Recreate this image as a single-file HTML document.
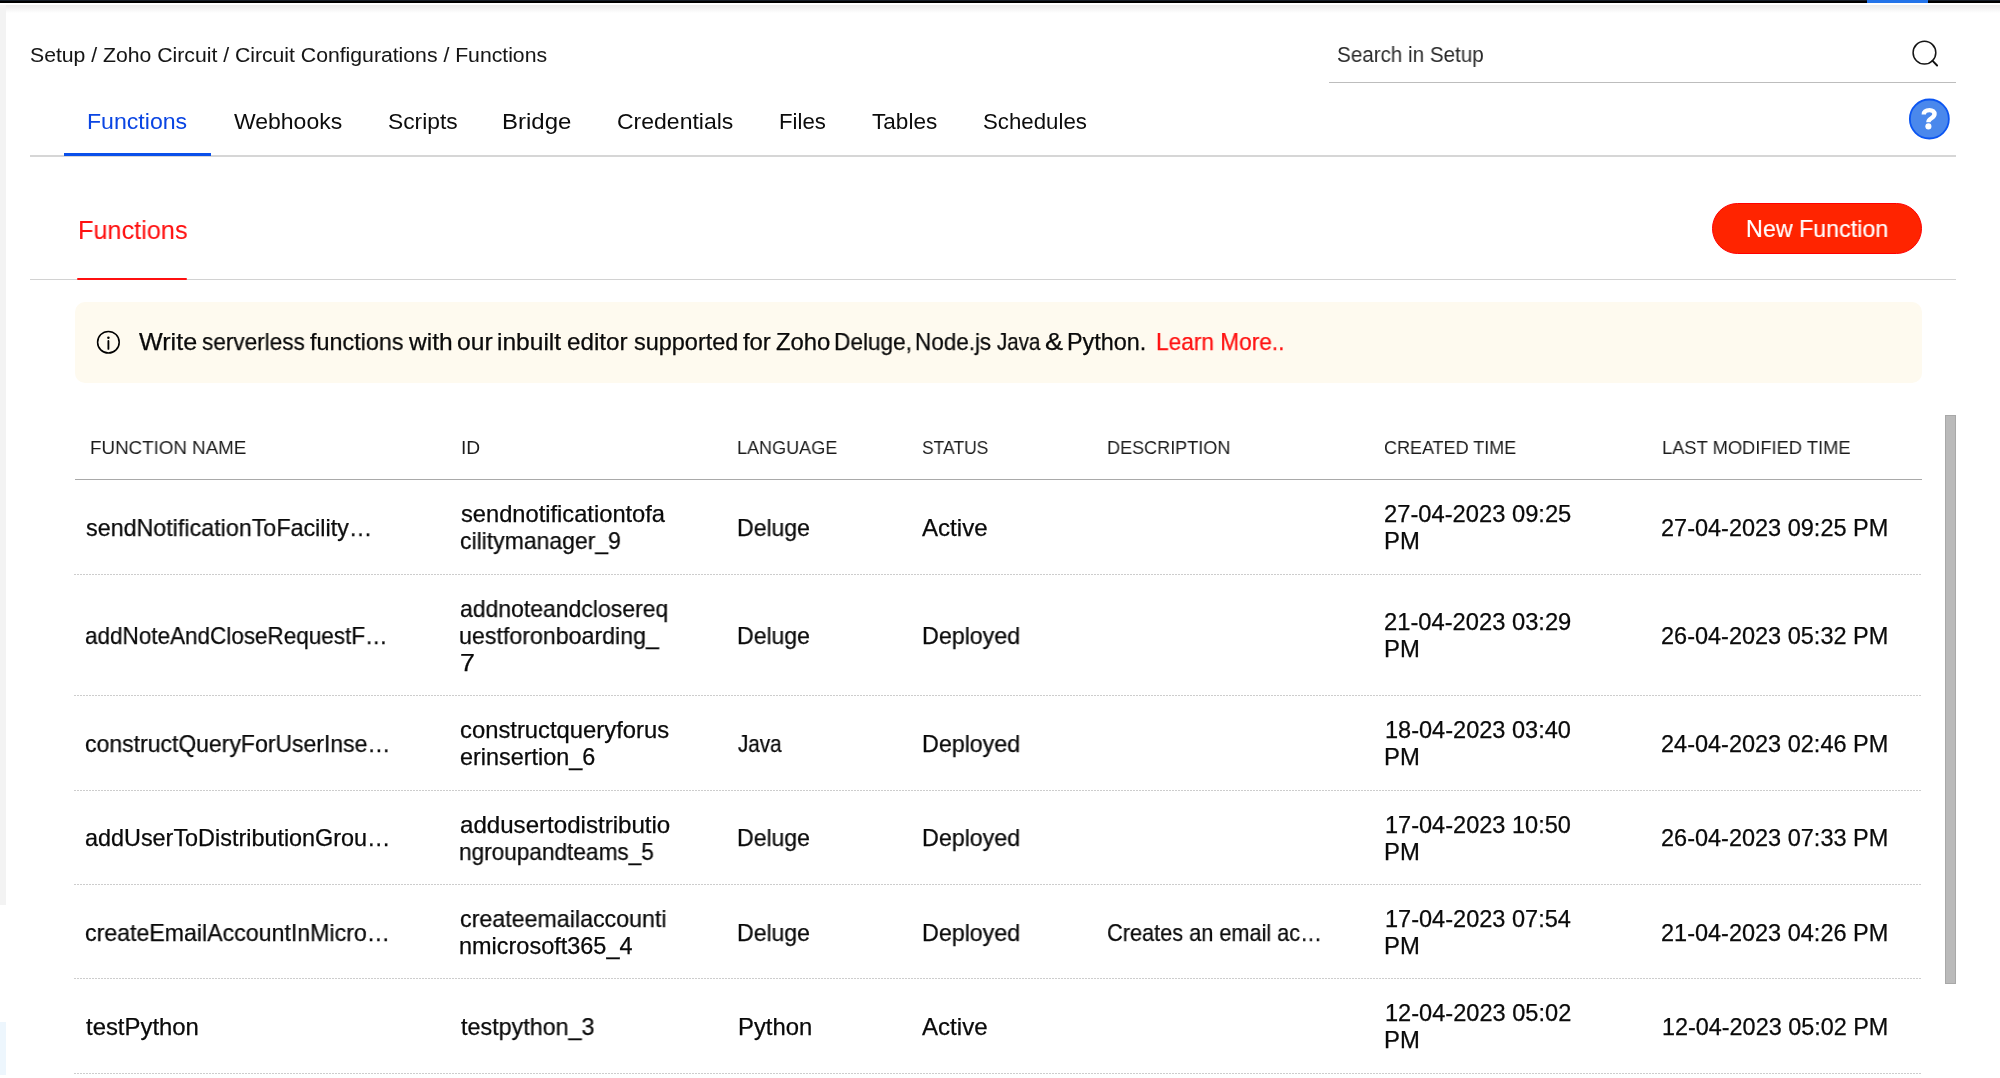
<!DOCTYPE html>
<html><head><meta charset="utf-8"><style>
html,body{margin:0;padding:0;background:#fff;width:2000px;height:1078px;overflow:hidden;position:relative;font-family:"Liberation Sans",sans-serif}
.t{position:absolute;white-space:nowrap;line-height:1;transform-origin:0 0;will-change:transform}
.a{position:absolute}
.dot{position:absolute;left:74px;width:1848px;height:1px;background:repeating-linear-gradient(to right,#cdcdcd 0 2px,transparent 2px 3px)}
</style></head><body>
<div class="a" style="left:0;top:0;width:2000px;height:1px;background:#161d27"></div>
<div class="a" style="left:0;top:1px;width:2000px;height:2px;background:#000"></div>
<div class="a" style="left:1867px;top:0;width:61px;height:3px;background:#2374ea"></div>
<div class="a" style="left:0;top:3px;width:2000px;height:10px;background:linear-gradient(#fff 0,#fff 20%,#ececec 25%,#fff 100%)"></div>
<div class="a" style="left:0;top:5px;width:6px;height:900px;background:#f3f3f3"></div>
<div class="a" style="left:0;top:1022px;width:6px;height:53px;background:#edf6fd"></div>
<!-- search underline -->
<div class="a" style="left:1329px;top:81.5px;width:627px;height:1.5px;background:#bdbdbd"></div>
<svg class="a" style="left:1900px;top:30px" width="50" height="50" viewBox="0 0 50 50">
 <circle cx="24.45" cy="22.65" r="11.35" fill="none" stroke="#151515" stroke-width="1.55"/>
 <line x1="32.4" y1="30.7" x2="37.1" y2="35.5" stroke="#111" stroke-width="1.9" stroke-linecap="round"/>
</svg>
<svg class="a" style="left:1899px;top:89px" width="60" height="60" viewBox="0 0 60 60">
 <circle cx="30.35" cy="30" r="19.5" fill="#4a88ec" stroke="#0b55f2" stroke-width="1.8"/>
 <path d="M24.8 25.5 C24.9 22.3 27.4 21.1 30.5 21.1 C33.6 21.1 35.5 22.9 35.5 25.1 C35.5 27.5 33.7 28.3 32.0 29.5 C30.2 30.7 29.4 31.3 29.4 33.3" fill="none" stroke="#fff" stroke-width="4.4" stroke-linecap="butt"/>
 <circle cx="29.4" cy="37.4" r="3.05" fill="#fff"/>
</svg>
<!-- tabs line -->
<div class="a" style="left:30px;top:155px;width:1926px;height:1.5px;background:#d6d6d6"></div>
<div class="a" style="left:64px;top:153px;width:147px;height:3px;background:#0a50ea"></div>
<!-- functions line -->
<div class="a" style="left:30px;top:279px;width:1926px;height:1.2px;background:#d2d2d2"></div>
<div class="a" style="left:77px;top:277.8px;width:110px;height:2.4px;border-radius:1.2px;background:#ff1010"></div>
<!-- button -->
<div class="a" style="left:1712px;top:203px;width:208px;height:49px;border-radius:26px;background:#ff2400;border:1.5px solid #ff0000"></div>
<!-- banner -->
<div class="a" style="left:74.5px;top:302.2px;width:1847.5px;height:80.6px;border-radius:10px;background:#fefaef"></div>
<svg class="a" style="left:90px;top:324px" width="36" height="36" viewBox="0 0 36 36">
 <circle cx="18.4" cy="18.2" r="10.8" fill="none" stroke="#000" stroke-width="1.55"/>
 <circle cx="18.4" cy="13.7" r="1.25" fill="#000"/>
 <line x1="18.4" y1="16.9" x2="18.4" y2="24.9" stroke="#000" stroke-width="1.85" stroke-linecap="round"/>
</svg>
<!-- header line -->
<div class="a" style="left:74.5px;top:479px;width:1847.5px;height:1.2px;background:#a9a9a9"></div>
<div class="dot" style="top:573.7px"></div>
<div class="dot" style="top:695.0px"></div>
<div class="dot" style="top:790.1px"></div>
<div class="dot" style="top:883.8px"></div>
<div class="dot" style="top:978.3px"></div>
<div class="dot" style="top:1072.5px"></div>
<!-- scrollbar -->
<div class="a" style="left:1945px;top:415px;width:9px;height:567px;background:#bababa;border:1px solid #a8a8a8"></div>
<div class="t" style="left:29.84px;top:45.39px;font-size:20.8px;color:#161616;transform:scaleX(1.0189);-webkit-text-stroke:0.05px currentColor">Setup / Zoho Circuit / Circuit Configurations / Functions</div>
<div class="t" style="left:1337.06px;top:43.85px;font-size:21.2px;color:#2b2b2b;transform:scaleX(0.9730);-webkit-text-stroke:0px currentColor">Search in Setup</div>
<div class="t" style="left:86.79px;top:110.50px;font-size:22.2px;color:#0a45e3;transform:scaleX(1.0414);-webkit-text-stroke:0px currentColor">Functions</div>
<div class="t" style="left:233.80px;top:110.50px;font-size:22.2px;color:#0c0c0c;transform:scaleX(1.0357);-webkit-text-stroke:0px currentColor">Webhooks</div>
<div class="t" style="left:387.79px;top:110.50px;font-size:22.2px;color:#0c0c0c;transform:scaleX(1.0277);-webkit-text-stroke:0px currentColor">Scripts</div>
<div class="t" style="left:502.13px;top:110.50px;font-size:22.2px;color:#0c0c0c;transform:scaleX(1.0806);-webkit-text-stroke:0px currentColor">Bridge</div>
<div class="t" style="left:616.92px;top:110.50px;font-size:22.2px;color:#0c0c0c;transform:scaleX(1.0366);-webkit-text-stroke:0px currentColor">Credentials</div>
<div class="t" style="left:779.18px;top:110.50px;font-size:22.2px;color:#0c0c0c;transform:scaleX(0.9923);-webkit-text-stroke:0px currentColor">Files</div>
<div class="t" style="left:872.05px;top:110.50px;font-size:22.2px;color:#0c0c0c;transform:scaleX(1.0169);-webkit-text-stroke:0px currentColor">Tables</div>
<div class="t" style="left:983.30px;top:110.50px;font-size:22.2px;color:#0c0c0c;transform:scaleX(1.0031);-webkit-text-stroke:0px currentColor">Schedules</div>
<div class="t" style="left:77.63px;top:217.96px;font-size:25.8px;color:#ff1010;transform:scaleX(0.9795);-webkit-text-stroke:0.05px currentColor">Functions</div>
<div class="t" style="left:1745.58px;top:218.29px;font-size:23.4px;color:#ffffff;transform:scaleX(0.9949);-webkit-text-stroke:0.2px currentColor">New Function</div>
<div class="t" style="left:138.60px;top:331.19px;font-size:23.4px;color:#0a0a0a;transform:scaleX(1.0729);-webkit-text-stroke:0.25px currentColor">Write</div>
<div class="t" style="left:201.65px;top:331.19px;font-size:23.4px;color:#0a0a0a;transform:scaleX(0.9637);-webkit-text-stroke:0.25px currentColor">serverless</div>
<div class="t" style="left:310.00px;top:331.19px;font-size:23.4px;color:#0a0a0a;transform:scaleX(0.9976);-webkit-text-stroke:0.25px currentColor">functions</div>
<div class="t" style="left:409.38px;top:331.19px;font-size:23.4px;color:#0a0a0a;transform:scaleX(1.0501);-webkit-text-stroke:0.25px currentColor">with</div>
<div class="t" style="left:457.23px;top:331.19px;font-size:23.4px;color:#0a0a0a;transform:scaleX(1.0523);-webkit-text-stroke:0.25px currentColor">our</div>
<div class="t" style="left:497.47px;top:331.19px;font-size:23.4px;color:#0a0a0a;transform:scaleX(1.0493);-webkit-text-stroke:0.25px currentColor">inbuilt</div>
<div class="t" style="left:567.24px;top:331.19px;font-size:23.4px;color:#0a0a0a;transform:scaleX(1.0349);-webkit-text-stroke:0.25px currentColor">editor</div>
<div class="t" style="left:633.63px;top:331.19px;font-size:23.4px;color:#0a0a0a;transform:scaleX(1.0030);-webkit-text-stroke:0.25px currentColor">supported</div>
<div class="t" style="left:743.00px;top:331.19px;font-size:23.4px;color:#0a0a0a;transform:scaleX(1.0186);-webkit-text-stroke:0.25px currentColor">for</div>
<div class="t" style="left:776.25px;top:331.19px;font-size:23.4px;color:#0a0a0a;transform:scaleX(1.0202);-webkit-text-stroke:0.25px currentColor">Zoho</div>
<div class="t" style="left:834.23px;top:331.19px;font-size:23.4px;color:#0a0a0a;transform:scaleX(0.9678);-webkit-text-stroke:0.25px currentColor">Deluge,</div>
<div class="t" style="left:915.15px;top:331.19px;font-size:23.4px;color:#0a0a0a;transform:scaleX(0.9599);-webkit-text-stroke:0.25px currentColor">Node.js</div>
<div class="t" style="left:996.58px;top:331.19px;font-size:23.4px;color:#0a0a0a;transform:scaleX(0.8758);-webkit-text-stroke:0.25px currentColor">Java</div>
<div class="t" style="left:1045.45px;top:331.19px;font-size:23.4px;color:#0a0a0a;transform:scaleX(1.1590);-webkit-text-stroke:0.25px currentColor">&amp;</div>
<div class="t" style="left:1066.93px;top:331.19px;font-size:23.4px;color:#0a0a0a;transform:scaleX(0.9952);-webkit-text-stroke:0.25px currentColor">Python.</div>
<div class="t" style="left:1155.83px;top:331.19px;font-size:23.4px;color:#ff1010;transform:scaleX(0.9695);-webkit-text-stroke:0.25px currentColor">Learn More..</div>
<div class="t" style="left:90.33px;top:439.00px;font-size:18.9px;color:#1c1c1c;transform:scaleX(0.9934);-webkit-text-stroke:0px currentColor">FUNCTION NAME</div>
<div class="t" style="left:460.55px;top:439.00px;font-size:18.9px;color:#1c1c1c;transform:scaleX(1.0168);-webkit-text-stroke:0px currentColor">ID</div>
<div class="t" style="left:737.49px;top:439.00px;font-size:18.9px;color:#1c1c1c;transform:scaleX(0.9547);-webkit-text-stroke:0px currentColor">LANGUAGE</div>
<div class="t" style="left:922.35px;top:439.00px;font-size:18.9px;color:#1c1c1c;transform:scaleX(0.9251);-webkit-text-stroke:0px currentColor">STATUS</div>
<div class="t" style="left:1107.09px;top:439.00px;font-size:18.9px;color:#1c1c1c;transform:scaleX(0.9553);-webkit-text-stroke:0px currentColor">DESCRIPTION</div>
<div class="t" style="left:1384.16px;top:439.00px;font-size:18.9px;color:#1c1c1c;transform:scaleX(0.9519);-webkit-text-stroke:0px currentColor">CREATED TIME</div>
<div class="t" style="left:1661.57px;top:439.00px;font-size:18.9px;color:#1c1c1c;transform:scaleX(0.9690);-webkit-text-stroke:0px currentColor">LAST MODIFIED TIME</div>
<div class="t" style="left:85.74px;top:516.84px;font-size:23.4px;color:#0a0a0a;transform:scaleX(0.9957);-webkit-text-stroke:0.25px currentColor">sendNotificationToFacility…</div>
<div class="t" style="left:460.53px;top:503.24px;font-size:23.4px;color:#0a0a0a;transform:scaleX(1.0123);-webkit-text-stroke:0.25px currentColor">sendnotificationtofa</div>
<div class="t" style="left:460.18px;top:530.24px;font-size:23.4px;color:#0a0a0a;transform:scaleX(0.9821);-webkit-text-stroke:0.25px currentColor">cilitymanager_9</div>
<div class="t" style="left:737.40px;top:516.84px;font-size:23.4px;color:#0a0a0a;transform:scaleX(0.9849);-webkit-text-stroke:0.25px currentColor">Deluge</div>
<div class="t" style="left:922.05px;top:516.84px;font-size:23.4px;color:#0a0a0a;transform:scaleX(1.0299);-webkit-text-stroke:0.25px currentColor">Active</div>
<div class="t" style="left:1383.89px;top:503.24px;font-size:23.4px;color:#0a0a0a;transform:scaleX(1.0142);-webkit-text-stroke:0.25px currentColor">27-04-2023 09:25</div>
<div class="t" style="left:1384.04px;top:530.24px;font-size:23.4px;color:#0a0a0a;transform:scaleX(1.0191);-webkit-text-stroke:0.25px currentColor">PM</div>
<div class="t" style="left:1661.10px;top:516.84px;font-size:23.4px;color:#0a0a0a;transform:scaleX(1.0045);-webkit-text-stroke:0.25px currentColor">27-04-2023 09:25 PM</div>
<div class="t" style="left:85.40px;top:624.84px;font-size:23.4px;color:#0a0a0a;transform:scaleX(0.9614);-webkit-text-stroke:0.25px currentColor">addNoteAndCloseRequestF…</div>
<div class="t" style="left:460.18px;top:597.74px;font-size:23.4px;color:#0a0a0a;transform:scaleX(0.9822);-webkit-text-stroke:0.25px currentColor">addnoteandclosereq</div>
<div class="t" style="left:459.45px;top:624.74px;font-size:23.4px;color:#0a0a0a;transform:scaleX(0.9920);-webkit-text-stroke:0.25px currentColor">uestforonboarding_</div>
<div class="t" style="left:459.64px;top:651.74px;font-size:23.4px;color:#0a0a0a;transform:scaleX(1.1487);-webkit-text-stroke:0.25px currentColor">7</div>
<div class="t" style="left:737.40px;top:624.84px;font-size:23.4px;color:#0a0a0a;transform:scaleX(0.9849);-webkit-text-stroke:0.25px currentColor">Deluge</div>
<div class="t" style="left:922.08px;top:624.84px;font-size:23.4px;color:#0a0a0a;transform:scaleX(0.9935);-webkit-text-stroke:0.25px currentColor">Deployed</div>
<div class="t" style="left:1383.89px;top:611.24px;font-size:23.4px;color:#0a0a0a;transform:scaleX(1.0142);-webkit-text-stroke:0.25px currentColor">21-04-2023 03:29</div>
<div class="t" style="left:1384.04px;top:638.24px;font-size:23.4px;color:#0a0a0a;transform:scaleX(1.0191);-webkit-text-stroke:0.25px currentColor">PM</div>
<div class="t" style="left:1661.10px;top:624.84px;font-size:23.4px;color:#0a0a0a;transform:scaleX(1.0045);-webkit-text-stroke:0.25px currentColor">26-04-2023 05:32 PM</div>
<div class="t" style="left:85.38px;top:733.04px;font-size:23.4px;color:#0a0a0a;transform:scaleX(0.9831);-webkit-text-stroke:0.25px currentColor">constructQueryForUserInse…</div>
<div class="t" style="left:460.16px;top:719.44px;font-size:23.4px;color:#0a0a0a;transform:scaleX(1.0180);-webkit-text-stroke:0.25px currentColor">constructqueryforus</div>
<div class="t" style="left:460.17px;top:746.44px;font-size:23.4px;color:#0a0a0a;transform:scaleX(0.9985);-webkit-text-stroke:0.25px currentColor">erinsertion_6</div>
<div class="t" style="left:737.68px;top:733.04px;font-size:23.4px;color:#0a0a0a;transform:scaleX(0.8799);-webkit-text-stroke:0.25px currentColor">Java</div>
<div class="t" style="left:922.08px;top:733.04px;font-size:23.4px;color:#0a0a0a;transform:scaleX(0.9935);-webkit-text-stroke:0.25px currentColor">Deployed</div>
<div class="t" style="left:1384.93px;top:719.44px;font-size:23.4px;color:#0a0a0a;transform:scaleX(1.0065);-webkit-text-stroke:0.25px currentColor">18-04-2023 03:40</div>
<div class="t" style="left:1384.04px;top:746.44px;font-size:23.4px;color:#0a0a0a;transform:scaleX(1.0191);-webkit-text-stroke:0.25px currentColor">PM</div>
<div class="t" style="left:1661.10px;top:733.04px;font-size:23.4px;color:#0a0a0a;transform:scaleX(1.0045);-webkit-text-stroke:0.25px currentColor">24-04-2023 02:46 PM</div>
<div class="t" style="left:85.37px;top:827.44px;font-size:23.4px;color:#0a0a0a;transform:scaleX(0.9998);-webkit-text-stroke:0.25px currentColor">addUserToDistributionGrou…</div>
<div class="t" style="left:460.15px;top:813.84px;font-size:23.4px;color:#0a0a0a;transform:scaleX(1.0299);-webkit-text-stroke:0.25px currentColor">addusertodistributio</div>
<div class="t" style="left:459.49px;top:840.84px;font-size:23.4px;color:#0a0a0a;transform:scaleX(0.9667);-webkit-text-stroke:0.25px currentColor">ngroupandteams_5</div>
<div class="t" style="left:737.40px;top:827.44px;font-size:23.4px;color:#0a0a0a;transform:scaleX(0.9849);-webkit-text-stroke:0.25px currentColor">Deluge</div>
<div class="t" style="left:922.08px;top:827.44px;font-size:23.4px;color:#0a0a0a;transform:scaleX(0.9935);-webkit-text-stroke:0.25px currentColor">Deployed</div>
<div class="t" style="left:1384.93px;top:813.84px;font-size:23.4px;color:#0a0a0a;transform:scaleX(1.0065);-webkit-text-stroke:0.25px currentColor">17-04-2023 10:50</div>
<div class="t" style="left:1384.04px;top:840.84px;font-size:23.4px;color:#0a0a0a;transform:scaleX(1.0191);-webkit-text-stroke:0.25px currentColor">PM</div>
<div class="t" style="left:1661.10px;top:827.44px;font-size:23.4px;color:#0a0a0a;transform:scaleX(1.0045);-webkit-text-stroke:0.25px currentColor">26-04-2023 07:33 PM</div>
<div class="t" style="left:85.38px;top:921.54px;font-size:23.4px;color:#0a0a0a;transform:scaleX(0.9896);-webkit-text-stroke:0.25px currentColor">createEmailAccountInMicro…</div>
<div class="t" style="left:460.17px;top:907.94px;font-size:23.4px;color:#0a0a0a;transform:scaleX(0.9930);-webkit-text-stroke:0.25px currentColor">createemailaccounti</div>
<div class="t" style="left:459.43px;top:934.94px;font-size:23.4px;color:#0a0a0a;transform:scaleX(1.0032);-webkit-text-stroke:0.25px currentColor">nmicrosoft365_4</div>
<div class="t" style="left:737.40px;top:921.54px;font-size:23.4px;color:#0a0a0a;transform:scaleX(0.9849);-webkit-text-stroke:0.25px currentColor">Deluge</div>
<div class="t" style="left:922.08px;top:921.54px;font-size:23.4px;color:#0a0a0a;transform:scaleX(0.9935);-webkit-text-stroke:0.25px currentColor">Deployed</div>
<div class="t" style="left:1106.78px;top:921.54px;font-size:23.4px;color:#0a0a0a;transform:scaleX(0.9285);-webkit-text-stroke:0.25px currentColor">Creates an email ac…</div>
<div class="t" style="left:1384.93px;top:907.94px;font-size:23.4px;color:#0a0a0a;transform:scaleX(1.0065);-webkit-text-stroke:0.25px currentColor">17-04-2023 07:54</div>
<div class="t" style="left:1384.04px;top:934.94px;font-size:23.4px;color:#0a0a0a;transform:scaleX(1.0191);-webkit-text-stroke:0.25px currentColor">PM</div>
<div class="t" style="left:1661.10px;top:921.54px;font-size:23.4px;color:#0a0a0a;transform:scaleX(1.0045);-webkit-text-stroke:0.25px currentColor">21-04-2023 04:26 PM</div>
<div class="t" style="left:86.10px;top:1015.89px;font-size:23.4px;color:#0a0a0a;transform:scaleX(1.0215);-webkit-text-stroke:0.25px currentColor">testPython</div>
<div class="t" style="left:460.90px;top:1015.79px;font-size:23.4px;color:#0a0a0a;transform:scaleX(0.9958);-webkit-text-stroke:0.25px currentColor">testpython_3</div>
<div class="t" style="left:737.64px;top:1015.89px;font-size:23.4px;color:#0a0a0a;transform:scaleX(1.0185);-webkit-text-stroke:0.25px currentColor">Python</div>
<div class="t" style="left:922.05px;top:1015.89px;font-size:23.4px;color:#0a0a0a;transform:scaleX(1.0299);-webkit-text-stroke:0.25px currentColor">Active</div>
<div class="t" style="left:1384.93px;top:1002.29px;font-size:23.4px;color:#0a0a0a;transform:scaleX(1.0085);-webkit-text-stroke:0.25px currentColor">12-04-2023 05:02</div>
<div class="t" style="left:1384.04px;top:1029.29px;font-size:23.4px;color:#0a0a0a;transform:scaleX(1.0191);-webkit-text-stroke:0.25px currentColor">PM</div>
<div class="t" style="left:1662.14px;top:1015.89px;font-size:23.4px;color:#0a0a0a;transform:scaleX(0.9999);-webkit-text-stroke:0.25px currentColor">12-04-2023 05:02 PM</div>
</body></html>
